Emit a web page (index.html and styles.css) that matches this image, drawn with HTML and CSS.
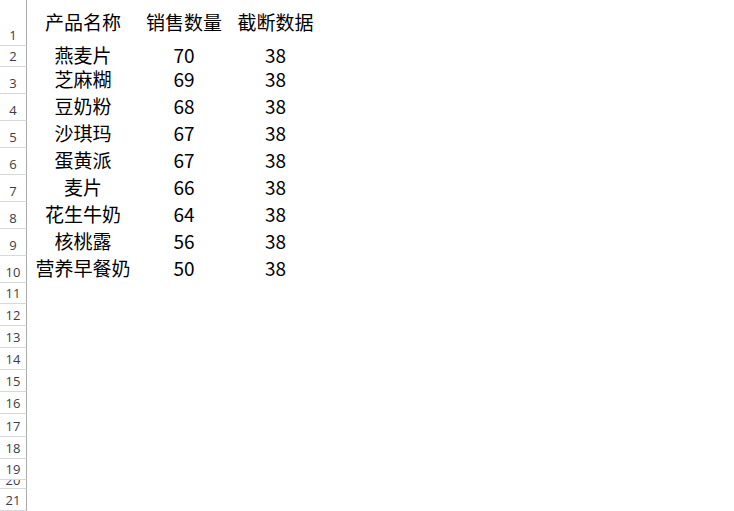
FILE: index.html
```html
<!DOCTYPE html>
<html lang="zh-CN">
<head>
<meta charset="utf-8">
<title>Sheet</title>
<link rel="stylesheet" href="styles.css">
</head>
<body>
<div class="sheet">
  <div class="row h-head"><div class="num">1</div><div class="cell a">产品名称</div><div class="cell b">销售数量</div><div class="cell c">截断数据</div></div>
  <div class="row h-21"><div class="num">2</div><div class="cell a">燕麦片</div><div class="cell b">70</div><div class="cell c">38</div></div>
  <div class="row h-27"><div class="num">3</div><div class="cell a">芝麻糊</div><div class="cell b">69</div><div class="cell c">38</div></div>
  <div class="row h-27"><div class="num">4</div><div class="cell a">豆奶粉</div><div class="cell b">68</div><div class="cell c">38</div></div>
  <div class="row h-27"><div class="num">5</div><div class="cell a">沙琪玛</div><div class="cell b">67</div><div class="cell c">38</div></div>
  <div class="row h-27"><div class="num">6</div><div class="cell a">蛋黄派</div><div class="cell b">67</div><div class="cell c">38</div></div>
  <div class="row h-27"><div class="num">7</div><div class="cell a">麦片</div><div class="cell b">66</div><div class="cell c">38</div></div>
  <div class="row h-27"><div class="num">8</div><div class="cell a">花生牛奶</div><div class="cell b">64</div><div class="cell c">38</div></div>
  <div class="row h-27"><div class="num">9</div><div class="cell a">核桃露</div><div class="cell b">56</div><div class="cell c">38</div></div>
  <div class="row h-27"><div class="num">10</div><div class="cell a">营养早餐奶</div><div class="cell b">50</div><div class="cell c">38</div></div>
  <div class="row h-21"><div class="num">11</div></div>
  <div class="row h-22"><div class="num">12</div></div>
  <div class="row h-22"><div class="num">13</div></div>
  <div class="row h-22"><div class="num">14</div></div>
  <div class="row h-22"><div class="num">15</div></div>
  <div class="row h-22"><div class="num">16</div></div>
  <div class="row h-23"><div class="num">17</div></div>
  <div class="row h-22"><div class="num">18</div></div>
  <div class="row h-21"><div class="num">19</div></div>
  <div class="row h-9"><div class="num">20</div></div>
  <div class="row h-22"><div class="num">21</div></div>
</div>
</body>
</html>
```

FILE: styles.css
```css
html, body {
  margin: 0;
  padding: 0;
  background: #ffffff;
}
body {
  width: 734px;
  height: 511px;
  overflow: hidden;
}
.sheet {
  display: flex;
  flex-direction: column;
}
.row {
  display: flex;
  flex: none;
}
.h-head { height: 46px; }
.h-21 { height: 21px; }
.h-22 { height: 22px; }
.h-23 { height: 23px; }
.h-27 { height: 27px; }
.h-9 { height: 9px; }
.num {
  box-sizing: border-box;
  width: 27px;
  flex: none;
  border-right: 1px solid #ababab;
  border-bottom: 1px solid #d8d8d8;
  display: flex;
  align-items: flex-end;
  justify-content: center;
  overflow: hidden;
  font-family: "Open Sans", "Noto Sans", sans-serif;
  font-size: 13px;
  line-height: 16px;
  color: #3c3c46;
  padding-bottom: 2px;
}
.h-9 .num { padding-bottom: 0; }
.cell {
  box-sizing: border-box;
  display: flex;
  align-items: center;
  justify-content: center;
  padding-bottom: 4px;
  font-family: "Noto Sans CJK SC", "Noto Sans", sans-serif;
  font-size: 19px;
  line-height: 1;
  color: #000;
  white-space: nowrap;
}
.a { width: 112px; }
.b { width: 90px; }
.c { width: 93px; }
```
